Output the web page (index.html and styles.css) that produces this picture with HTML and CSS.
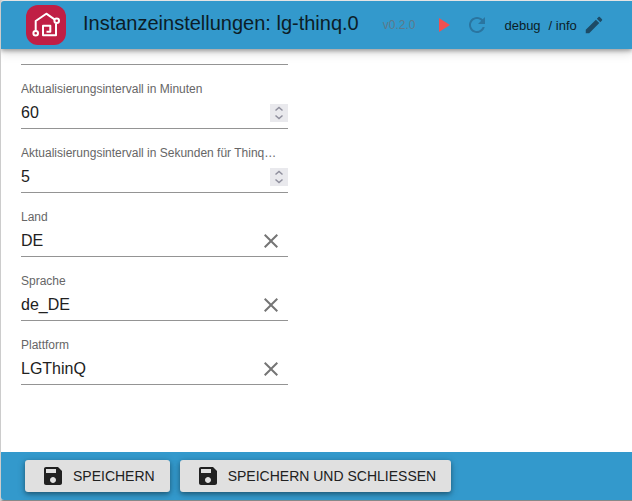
FILE: index.html
```html
<!DOCTYPE html>
<html lang="de">
<head>
<meta charset="utf-8">
<meta name="viewport" content="width=device-width, initial-scale=1">
<title>Instanzeinstellungen: lg-thinq.0</title>
<link rel="stylesheet" href="styles.css">
</head>
<body>
<svg class="sprite" aria-hidden="true">
  <symbol id="save" viewBox="0 0 24 24"><path d="M17 3H5c-1.110 0-2 .9-2 2v14c0 1.100.89 2 2 2h14c1.100 0 2-.9 2-2V7l-4-4zm-5 16c-1.660 0-3-1.340-3-3s1.340-3 3-3 3 1.340 3 3-1.340 3-3 3zm3-10H5V5h10v4z"/></symbol>
  <symbol id="close" viewBox="0 0 24 24"><path d="M19 6.410L17.590 5 12 10.590 6.410 5 5 6.410 10.590 12 5 17.590 6.410 19 12 13.410 17.590 19 19 17.590 13.410 12z"/></symbol>
  <symbol id="up" viewBox="0 0 18 9"><path d="M5.500 6.500L9 3.500l3.500 3" fill="none" stroke="currentColor" stroke-width="1.500"/></symbol>
  <symbol id="down" viewBox="0 0 18 9"><path d="M5.500 2.500L9 5.500l3.500-3" fill="none" stroke="currentColor" stroke-width="1.500"/></symbol>
</svg>
<div class="dialog">
  <header class="bar header">
    <svg class="logo" viewBox="0 0 40 40" aria-hidden="true">
      <rect width="40" height="40" rx="12" fill="#c01f45"/>
      <g fill="none" stroke="#fff" stroke-width="2">
        <path d="M9.700 26V16L20.300 8.700l8.200 5.600M30 18.500V30.200H17V20.700h7.300v6h-3.800" stroke-linejoin="round"/>
        <circle cx="9.700" cy="28.300" r="2.300"/>
        <circle cx="30.700" cy="15.800" r="2.300"/>
      </g>
    </svg>
    <h1 class="title">Instanzeinstellungen: lg-thinq.0</h1>
    <span class="version">v0.2.0</span>
    <button class="icon-button play" type="button" aria-label="Start"><svg viewBox="0 0 24 24"><path d="M8 5v14l11-7z"/></svg></button>
    <button class="icon-button refresh" type="button" aria-label="Neustart" disabled><svg viewBox="0 0 24 24"><path d="M17.650 6.350C16.200 4.900 14.210 4 12 4c-4.420 0-7.990 3.580-7.990 8s3.570 8 7.990 8c3.730 0 6.840-2.550 7.730-6h-2.080c-.82 2.330-3.040 4-5.650 4-3.310 0-6-2.690-6-6s2.690-6 6-6c1.660 0 3.140.69 4.220 1.780L13 11h7V4l-2.350 2.350z"/></svg></button>
    <span class="levels"><span>debug</span><span>/ info</span></span>
    <button class="icon-button edit" type="button" aria-label="Bearbeiten"><svg viewBox="0 0 24 24"><path d="M3 17.250V21h3.750L17.810 9.940l-3.750-3.750L3 17.250zM20.710 7.040c.39-.39.39-1.020 0-1.410l-2.340-2.340c-.39-.39-1.020-.39-1.410 0l-1.830 1.830 3.750 3.750 1.830-1.830z"/></svg></button>
  </header>
  <main class="content">
    <form class="fields" id="settings">
      <div class="field">
        <label for="minutes">Aktualisierungsintervall in Minuten</label>
        <div class="control">
          <input id="minutes" type="number" value="60">
          <div class="spinner">
            <button type="button" aria-label="Mehr"><svg><use href="#up"/></svg></button>
            <button type="button" aria-label="Weniger"><svg><use href="#down"/></svg></button>
          </div>
        </div>
      </div>
      <div class="field">
        <label for="seconds">Aktualisierungsintervall in Sekunden für Thinq…</label>
        <div class="control">
          <input id="seconds" type="number" value="5">
          <div class="spinner">
            <button type="button" aria-label="Mehr"><svg><use href="#up"/></svg></button>
            <button type="button" aria-label="Weniger"><svg><use href="#down"/></svg></button>
          </div>
        </div>
      </div>
      <div class="field">
        <label for="country">Land</label>
        <div class="control">
          <input id="country" type="text" value="DE">
          <button class="clear" type="button" aria-label="Leeren"><svg><use href="#close"/></svg></button>
        </div>
      </div>
      <div class="field">
        <label for="language">Sprache</label>
        <div class="control">
          <input id="language" type="text" value="de_DE">
          <button class="clear" type="button" aria-label="Leeren"><svg><use href="#close"/></svg></button>
        </div>
      </div>
      <div class="field">
        <label for="platform">Plattform</label>
        <div class="control">
          <input id="platform" type="text" value="LGThinQ">
          <button class="clear" type="button" aria-label="Leeren"><svg><use href="#close"/></svg></button>
        </div>
      </div>
    </form>
  </main>
  <footer class="bar footer">
    <button class="save" type="submit" form="settings"><svg><use href="#save"/></svg>SPEICHERN</button>
    <button class="save" type="submit" form="settings"><svg><use href="#save"/></svg>SPEICHERN UND SCHLIESSEN</button>
  </footer>
</div>
</body>
</html>
```
FILE: styles.css
```css
* { box-sizing: border-box; }

body {
  margin: 0;
  background: #ccc;
  font-family: "Liberation Sans", Arial, sans-serif;
  color: #212121;
}

button {
  padding: 0;
  border: 0;
  background: none;
  color: inherit;
  font: inherit;
}

svg { display: block; fill: currentColor; }

.sprite { position: absolute; width: 0; height: 0; }

.dialog {
  display: flex;
  flex-direction: column;
  min-height: 100vh;
  border: 1px solid #ccc;
  border-top-color: #e4e4e4;
  border-bottom-color: #888;
  border-right: 0;
  border-radius: 4px 0 0 4px;
  background: #fff;
  overflow: hidden;
}

.bar {
  display: flex;
  align-items: center;
  flex: none;
  min-height: 48px;
  padding: 0 24px;
  background: #3399cc;
}

.header {
  padding-left: 25px;
  color: #0c1d27;
  box-shadow: 0 2px 4px rgba(0, 0, 0, .3), 0 4px 10px rgba(0, 0, 0, .15);
}

.logo { flex: none; width: 40px; height: 40px; }

.title {
  margin: 0 24px 4px 17px;
  font-size: 20px;
  line-height: 32px;
  font-weight: 400;
  white-space: nowrap;
}

.version { margin-right: 16px; color: #5c7a8b; font-size: 12px; }

.icon-button { flex: none; }
.icon-button svg { width: 24px; height: 24px; }
.play { margin-right: 10px; color: #f05050; }
.refresh { margin-right: 15px; color: #2a75a0; }
.edit { color: #1d4b66; }
.edit svg { width: 22px; height: 22px; }

.levels {
  display: flex;
  gap: 8px;
  margin-right: 6px;
  font-size: 13px;
  white-space: nowrap;
}

.content { flex: 1; padding: 15px 20px; }

.fields {
  max-width: 267px;
  border-top: 1px solid #949494;
}

.field { padding-top: 16px; border-bottom: 1px solid #949494; }

.field label {
  display: block;
  overflow: hidden;
  color: #666;
  font-size: 12px;
  line-height: 16px;
  text-overflow: ellipsis;
  white-space: nowrap;
}

.control { display: flex; align-items: center; height: 31px; }

.control input {
  flex: 1;
  min-width: 0;
  padding: 0;
  border: 0;
  outline: 0;
  background: none;
  color: #212121;
  font: inherit;
  font-size: 16px;
  appearance: textfield;
}

.control input::-webkit-inner-spin-button { appearance: none; margin: 0; }

.spinner { width: 18px; background: #e9e9ed; color: #8f8f9d; }
.spinner button, .spinner svg { display: block; width: 18px; height: 9px; }

.clear { margin-right: 5px; color: #757575; }
.clear svg { width: 24px; height: 24px; }

.footer { gap: 10px; }

.save {
  display: flex;
  align-items: center;
  gap: 8px;
  height: 32px;
  padding: 0 15px 0 16px;
  border-radius: 3px;
  background: #e0e0e0;
  box-shadow: 0 2px 4px rgba(0, 0, 0, .3), 0 2px 8px rgba(0, 0, 0, .2);
  font-size: 14px;
  white-space: nowrap;
}

.save svg { width: 24px; height: 24px; }
```
